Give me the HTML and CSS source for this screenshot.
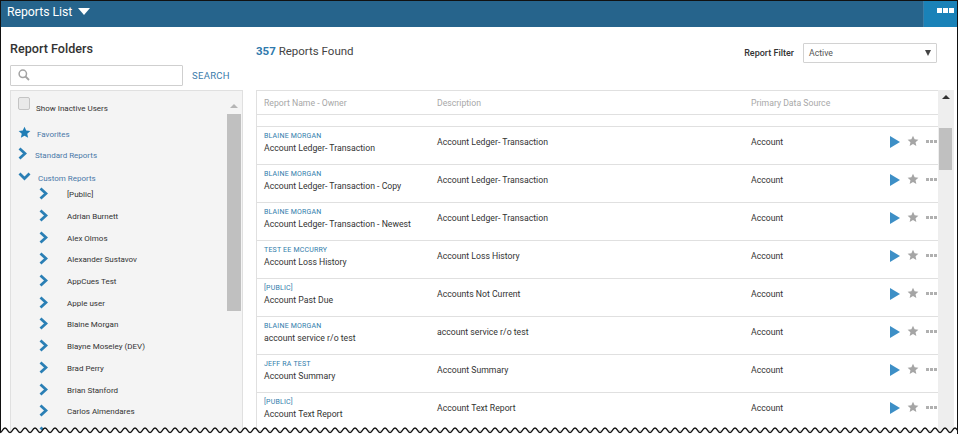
FILE: index.html
```html
<!DOCTYPE html>
<html lang="en">
<head>
<meta charset="utf-8">
<title>Reports List</title>
<link rel="stylesheet" href="styles.css">
</head>
<body>
<svg width="0" height="0" class="defs">
  <defs>
    <symbol id="chev" viewBox="0 0 9 13"><path d="M1.500 1.500 L7 6.500 L1.500 11.500" fill="none" stroke="#2a7fb5" stroke-width="2.800"/></symbol>
    <symbol id="star" viewBox="0 0 24 24"><path d="M12 1.500l3.200 7 7.600.8-5.700 5.100 1.600 7.500L12 18.100l-6.700 3.800 1.600-7.500L1.200 9.300l7.600-.8z"/></symbol>
  </defs>
</svg>
<div class="app">
  <header class="topbar">
    <div class="topbar-title">Reports List <span class="caret"></span></div>
    <button class="menu-btn"><i></i><i></i><i></i></button>
  </header>
  <main class="content">
    <aside class="sidebar">
      <h2 class="side-title">Report Folders</h2>
      <div class="search-row">
        <div class="search-box">
          <svg width="12" height="12" viewBox="0 0 12 12"><circle cx="4.800" cy="4.800" r="3.700" fill="none" stroke="#a3a3a3" stroke-width="1.500"/><path d="M7.500 7.500L11 11" stroke="#a3a3a3" stroke-width="1.800"/></svg>
        </div>
        <span class="search-link">SEARCH</span>
      </div>
      <div class="tree-panel">
        <div class="tree">
          <div class="inactive"><span class="check"></span><span class="inactive-label">Show Inactive Users</span></div>
          <div class="node fav"><svg class="star-blue" width="13" height="13"><use href="#star"/></svg><span>Favorites</span></div>
          <div class="node std"><svg width="9" height="13"><use href="#chev"/></svg><span>Standard Reports</span></div>
          <div class="node cust"><svg width="13" height="9" viewBox="0 0 13 9"><path d="M1.500 1.500L6.500 6.500L11.500 1.500" fill="none" stroke="#2a7fb5" stroke-width="2.800"/></svg><span>Custom Reports</span></div>
          <ul class="users">
            <li><svg width="9" height="13"><use href="#chev"/></svg>[Public]</li>
            <li><svg width="9" height="13"><use href="#chev"/></svg>Adrian Burnett</li>
            <li><svg width="9" height="13"><use href="#chev"/></svg>Alex Olmos</li>
            <li><svg width="9" height="13"><use href="#chev"/></svg>Alexander Sustavov</li>
            <li><svg width="9" height="13"><use href="#chev"/></svg>AppCues Test</li>
            <li><svg width="9" height="13"><use href="#chev"/></svg>Apple user</li>
            <li><svg width="9" height="13"><use href="#chev"/></svg>Blaine Morgan</li>
            <li><svg width="9" height="13"><use href="#chev"/></svg>Blayne Moseley (DEV)</li>
            <li><svg width="9" height="13"><use href="#chev"/></svg>Brad Perry</li>
            <li><svg width="9" height="13"><use href="#chev"/></svg>Brian Stanford</li>
            <li><svg width="9" height="13"><use href="#chev"/></svg>Carlos Almendares</li>
            <li><svg width="9" height="13"><use href="#chev"/></svg></li>
          </ul>
        </div>
        <div class="side-scroll"><span class="arrow-up light"></span><span class="side-thumb"></span></div>
      </div>
    </aside>
    <section class="reports">
      <div class="reports-top">
        <div class="found"><b>357</b> Reports Found</div>
        <div class="filter">
          <span class="filter-label">Report Filter</span>
          <div class="select"><span>Active</span><span class="select-caret"></span></div>
        </div>
      </div>
      <div class="table-wrap">
        <div class="table">
          <div class="row head"><div>Report Name - Owner</div><div>Description</div><div>Primary Data Source</div></div>
          <div class="spacer"></div>
          <div class="row"><div class="name"><small>BLAINE MORGAN</small><p>Account Ledger- Transaction</p></div><div>Account Ledger- Transaction</div><div>Account</div><div class="actions"><svg class="play" width="10" height="12" viewBox="0 0 10 12"><path d="M0 0L10 6L0 12z"/></svg><svg class="star-grey" width="12" height="12"><use href="#star"/></svg><span class="dots"><i></i><i></i><i></i></span></div></div>
          <div class="row"><div class="name"><small>BLAINE MORGAN</small><p>Account Ledger- Transaction - Copy</p></div><div>Account Ledger- Transaction</div><div>Account</div><div class="actions"><svg class="play" width="10" height="12" viewBox="0 0 10 12"><path d="M0 0L10 6L0 12z"/></svg><svg class="star-grey" width="12" height="12"><use href="#star"/></svg><span class="dots"><i></i><i></i><i></i></span></div></div>
          <div class="row"><div class="name"><small>BLAINE MORGAN</small><p>Account Ledger- Transaction - Newest</p></div><div>Account Ledger- Transaction</div><div>Account</div><div class="actions"><svg class="play" width="10" height="12" viewBox="0 0 10 12"><path d="M0 0L10 6L0 12z"/></svg><svg class="star-grey" width="12" height="12"><use href="#star"/></svg><span class="dots"><i></i><i></i><i></i></span></div></div>
          <div class="row"><div class="name"><small>TEST EE MCCURRY</small><p>Account Loss History</p></div><div>Account Loss History</div><div>Account</div><div class="actions"><svg class="play" width="10" height="12" viewBox="0 0 10 12"><path d="M0 0L10 6L0 12z"/></svg><svg class="star-grey" width="12" height="12"><use href="#star"/></svg><span class="dots"><i></i><i></i><i></i></span></div></div>
          <div class="row"><div class="name"><small>[PUBLIC]</small><p>Account Past Due</p></div><div>Accounts Not Current</div><div>Account</div><div class="actions"><svg class="play" width="10" height="12" viewBox="0 0 10 12"><path d="M0 0L10 6L0 12z"/></svg><svg class="star-grey" width="12" height="12"><use href="#star"/></svg><span class="dots"><i></i><i></i><i></i></span></div></div>
          <div class="row"><div class="name"><small>BLAINE MORGAN</small><p>account service r/o test</p></div><div>account service r/o test</div><div>Account</div><div class="actions"><svg class="play" width="10" height="12" viewBox="0 0 10 12"><path d="M0 0L10 6L0 12z"/></svg><svg class="star-grey" width="12" height="12"><use href="#star"/></svg><span class="dots"><i></i><i></i><i></i></span></div></div>
          <div class="row"><div class="name"><small>JEFF RA TEST</small><p>Account Summary</p></div><div>Account Summary</div><div>Account</div><div class="actions"><svg class="play" width="10" height="12" viewBox="0 0 10 12"><path d="M0 0L10 6L0 12z"/></svg><svg class="star-grey" width="12" height="12"><use href="#star"/></svg><span class="dots"><i></i><i></i><i></i></span></div></div>
          <div class="row"><div class="name"><small>[PUBLIC]</small><p>Account Text Report</p></div><div>Account Text Report</div><div>Account</div><div class="actions"><svg class="play" width="10" height="12" viewBox="0 0 10 12"><path d="M0 0L10 6L0 12z"/></svg><svg class="star-grey" width="12" height="12"><use href="#star"/></svg><span class="dots"><i></i><i></i><i></i></span></div></div>
        </div>
        <div class="main-scroll"><span class="arrow-up"></span><span class="main-thumb"></span></div>
      </div>
    </section>
  </main>
</div>
<svg class="torn" width="957" height="8" viewBox="0 0 957 8">
  <defs><pattern id="zig" width="10" height="8" patternUnits="userSpaceOnUse"><path d="M0 6.500C2.500 6.500 2.500 2 5 2C7.500 2 7.500 6.500 10 6.500V8H0z" fill="#fff"/><path d="M0 6.500C2.500 6.500 2.500 2 5 2C7.500 2 7.500 6.500 10 6.500" fill="none" stroke="#111" stroke-width="1.500"/></pattern></defs>
  <rect width="957" height="8" fill="url(#zig)"/>
</svg>
</body>
</html>
```
FILE: styles.css
```css
* { box-sizing: border-box; }
html, body { margin: 0; padding: 0; height: 434px; overflow: hidden; background: #fff; }
body { font-family: Roboto, "Liberation Sans", sans-serif; color: #333; position: relative; }
.defs { position: absolute; }
.app { width: 958px; height: 434px; border: 1px solid #111; border-bottom: 0; overflow: hidden; display: flex; flex-direction: column; }
.topbar { height: 26px; flex: none; background: #26648c; display: flex; justify-content: space-between; }
.topbar-title { color: #fff; font-size: 12.300px; padding: 2px 0 0 6px; line-height: 18px; letter-spacing: -.05px; }
.caret { display: inline-block; width: 0; height: 0; border-left: 6.500px solid transparent; border-right: 6.500px solid transparent; border-top: 7px solid #fff; margin: 0 0 1px 3px; }
.menu-btn { width: 34px; height: 26px; border: 0; border-left: 1px solid #3a7ea8; background: #1a82b8; padding: 7px 0 0 13px; display: flex; gap: 1px; align-items: flex-start; }
.menu-btn i { width: 5px; height: 5px; background: #fff; display: block; }
.content { flex: 1; display: flex; min-height: 0; padding-left: 9px; }
.sidebar { width: 233px; flex: none; display: flex; flex-direction: column; }
.side-title { margin: 0; padding-top: 13px; font-size: 12.600px; font-weight: 500; line-height: 17px; color: #333; height: 38px; }
.search-row { display: flex; align-items: center; height: 21px; }
.search-box { width: 173px; height: 21px; border: 1px solid #cfcfcf; border-radius: 1px; padding: 3px 0 0 7px; }
.search-box svg { display: block; }
.search-link { margin-left: 9px; font-size: 9.500px; letter-spacing: .3px; color: #3a7cab; }
.tree-panel { margin-top: 4px; flex: 1; background: #f4f4f4; border: 1px solid #e0e0e0; display: flex; min-height: 0; overflow: hidden; }
.tree { flex: 1; min-width: 0; padding: 6px 0 0 7px; font-size: 8px; }
.inactive { display: flex; align-items: flex-start; height: 29px; }
.check { width: 12px; height: 13px; border: 1px solid #c4c4c4; border-radius: 2px; background: #e9e9e9; }
.inactive-label { margin: 7px 0 0 6px; color: #333; line-height: 10px; }
.node { display: flex; align-items: center; color: #4a78a8; font-weight: 400; }
.fav { height: 13px; }
.star-blue { fill: #1f7db5; margin-right: 6px; }
.fav span { margin-top: 4px; }
.std { height: 13px; margin-top: 8px; }
.std span { margin-left: 8px; margin-top: 3px; }
.cust { height: 11px; margin-top: 11px; }
.cust span { margin-left: 7px; margin-top: 4px; }
.users { list-style: none; margin: 2px 0 0; padding: 0 0 0 21px; color: #333; }
.users li { height: 21.700px; display: flex; align-items: center; }
.users svg { margin-right: 19px; transform: translateY(-1px); }
.side-scroll { width: 14px; margin-right: 1px; flex: none; position: relative; padding-top: 13px; display: flex; flex-direction: column; align-items: center; }
.arrow-up { width: 0; height: 0; flex: none; border-left: 4px solid transparent; border-right: 4px solid transparent; border-bottom: 4px solid #333; }
.arrow-up.light { border-bottom-color: #b5b5b5; }
.side-thumb { width: 14px; height: 197px; background: #c0c0c0; margin-top: 6px; }
.reports { flex: 1; min-width: 0; padding-left: 13px; display: flex; flex-direction: column; }
.reports-top { height: 63px; display: flex; justify-content: space-between; padding-right: 20px; }
.found { font-size: 11.500px; line-height: 14px; padding-top: 17px; color: #444; }
.found b { color: #2f79ad; font-weight: 700; }
.filter { display: flex; align-items: flex-start; padding-top: 16px; }
.filter-label { font-size: 9px; font-weight: 500; line-height: 20px; color: #333; }
.select { width: 134px; height: 20px; margin-left: 9px; border: 1px solid #d2d2d2; border-radius: 1px; display: flex; justify-content: space-between; align-items: center; padding: 0 5px; font-size: 8.700px; color: #555; }
.select-caret { width: 0; height: 0; border-left: 3.500px solid transparent; border-right: 3.500px solid transparent; border-top: 6px solid #444; }
.table-wrap { flex: 1; min-height: 0; display: flex; overflow: hidden; }
.table { width: 682px; flex: none; border-left: 1px solid #e0e0e0; border-top: 1px solid #e0e0e0; }
.row { display: grid; grid-template-columns: 173px 314px 120px 1fr; height: 38px; border-bottom: 1px solid #e0e0e0; padding-left: 7px; font-size: 8.700px; color: #333; align-items: center; }
.row > div { min-width: 0; white-space: nowrap; padding-bottom: 7px; }
.row > .name { padding-bottom: 5px; }
.row.head { height: 24px; color: #a8a8a8; }
.row.head > div { padding: 0; }
.spacer { height: 12px; border-bottom: 1px solid #e0e0e0; }
.row small { display: block; font-size: 7px; line-height: 9px; letter-spacing: .2px; color: #2f7cab; }
.row p { margin: 1px 0 0; line-height: 12px; }
.row > .actions { display: flex; align-items: center; justify-content: flex-end; padding: 0 1px 7px 0; }
.play { fill: #3d8fc6; }
.star-grey { fill: #a5a5a5; margin-left: 7px; margin-bottom: 2px; }
.dots { display: flex; gap: 1px; margin-left: 7px; width: 11px; margin-bottom: 1px; }
.dots i { width: 3px; height: 3px; background: #b0b0b0; display: block; }
.main-scroll { width: 16px; flex: none; background: #eeeeee; display: flex; flex-direction: column; align-items: flex-start; padding: 5px 0 0 1px; }
.main-scroll .arrow-up { margin-left: 2.500px; }
.main-thumb { width: 13px; height: 42px; background: #c0c0c0; margin-top: 29px; }
.torn { position: absolute; left: 0; bottom: 0; display: block; }
```
